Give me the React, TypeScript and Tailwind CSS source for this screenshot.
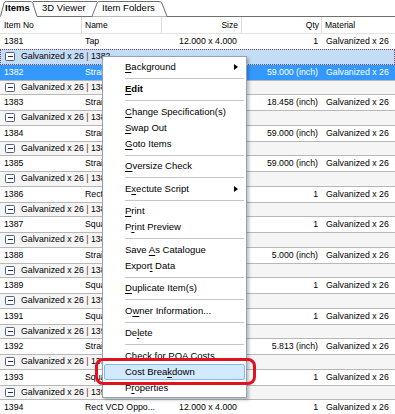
import React from 'react';

type Row =
  | { kind: 'group'; no: string; focused?: boolean }
  | { kind: 'item'; no: string; name: string; size?: string; qty: string; selected?: boolean };

const rows: Row[] = [
  { kind: 'item', no: '1381', name: 'Tap', size: '12.000 x 4.000', qty: '1' },
  { kind: 'group', no: '1382', focused: true },
  { kind: 'item', no: '1382', name: 'Straight Duct', qty: '59.000 (inch)', selected: true },
  { kind: 'group', no: '1383' },
  { kind: 'item', no: '1383', name: 'Straight Duct', qty: '18.458 (inch)' },
  { kind: 'group', no: '1384' },
  { kind: 'item', no: '1384', name: 'Straight Duct', qty: '59.000 (inch)' },
  { kind: 'group', no: '1385' },
  { kind: 'item', no: '1385', name: 'Straight Duct', qty: '59.000 (inch)' },
  { kind: 'group', no: '1386' },
  { kind: 'item', no: '1386', name: 'Rectangular Elbow', qty: '1' },
  { kind: 'group', no: '1387' },
  { kind: 'item', no: '1387', name: 'Square to Round', qty: '1' },
  { kind: 'group', no: '1388' },
  { kind: 'item', no: '1388', name: 'Straight Duct', qty: '5.000 (inch)' },
  { kind: 'group', no: '1389' },
  { kind: 'item', no: '1389', name: 'Square to Round', qty: '1' },
  { kind: 'group', no: '1391' },
  { kind: 'item', no: '1391', name: 'Square to Round', qty: '1' },
  { kind: 'group', no: '1392' },
  { kind: 'item', no: '1392', name: 'Straight Duct', qty: '5.813 (inch)' },
  { kind: 'group', no: '1393' },
  { kind: 'item', no: '1393', name: 'Square to Round', qty: '1' },
  { kind: 'group', no: '1394' },
  { kind: 'item', no: '1394', name: 'Rect VCD Oppo...', size: '12.000 x 4.000', qty: '1' },
];

type MenuEntry =
  | { sep: true }
  | { sep?: false; label: string; hot: number; arrow?: boolean; bold?: boolean; active?: boolean };

const menu: MenuEntry[] = [
  { label: 'Background', hot: 0, arrow: true },
  { sep: true },
  { label: 'Edit', hot: 0, bold: true },
  { sep: true },
  { label: 'Change Specification(s)', hot: 0 },
  { label: 'Swap Out', hot: 0 },
  { label: 'Goto Items', hot: 0 },
  { sep: true },
  { label: 'Oversize Check', hot: 0 },
  { sep: true },
  { label: 'Exectute Script', hot: 1, arrow: true },
  { sep: true },
  { label: 'Print', hot: 0 },
  { label: 'Print Preview', hot: 1 },
  { sep: true },
  { label: 'Save As Catalogue', hot: 5 },
  { label: 'Export Data', hot: 5 },
  { sep: true },
  { label: 'Duplicate Item(s)', hot: 0 },
  { sep: true },
  { label: 'Owner Information...', hot: 1 },
  { sep: true },
  { label: 'Delete', hot: 2 },
  { sep: true },
  { label: 'Check for POA Costs', hot: -1 },
  { label: 'Cost Breakdown', hot: 9, active: true },
  { label: 'Properties', hot: 1 },
];

const Hot = ({ text, i }: { text: string; i: number }) =>
  i < 0 ? (
    <>{text}</>
  ) : (
    <>
      {text.slice(0, i)}
      <span className="underline underline-offset-[1.5px]">{text[i]}</span>
      {text.slice(i + 1)}
    </>
  );

const TabStrip = () => (
  <div className="relative h-[17px] bg-white text-[9.5px] text-black">
    <svg className="absolute inset-0" width="395" height="17" viewBox="0 0 395 17">
      <path d="M37 16.5H395" stroke="#6f6f6f" fill="none" />
      <path d="M33 1.5H97" stroke="#6f6f6f" fill="none" />
      <path d="M92 16.5L97.3 2.6Q97.9 1.5 99.5 1.5H159Q161 1.5 161.8 3L167 16.5" fill="#fff" stroke="#6f6f6f" />
      <path d="M0.5 16.5L4 3Q4.6 1.5 6.5 1.5H30Q32 1.5 32.8 3L37 16.5" fill="#fff" stroke="#6f6f6f" />
    </svg>
    <div className="relative flex h-full items-center pb-[1px]">
      <span className="w-[37px] shrink-0 pl-[5px] font-bold">Items</span>
      <span className="w-[60px] shrink-0 pl-[5px]">3D Viewer</span>
      <span className="shrink-0 pl-[5px]">Item Folders</span>
    </div>
  </div>
);

const Header = () => (
  <div className="flex h-[17px] items-center border-b border-[#e2e2e2] bg-white text-[8.5px] text-black">
    <div className="flex h-full w-[82px] shrink-0 items-center border-r border-[#dcdcdc] pl-[4px]">Item No</div>
    <div className="flex h-full w-[80px] shrink-0 items-center border-r border-[#dcdcdc] pl-[3px]">Name</div>
    <div className="flex h-full w-[80px] shrink-0 items-center justify-end border-r border-[#dcdcdc] pr-[3px]">Size</div>
    <div className="flex h-full w-[80px] shrink-0 items-center justify-end border-r border-[#dcdcdc] pr-[2px]">Qty</div>
    <div className="flex h-full flex-1 items-center pl-[3px]">Material</div>
  </div>
);

const GroupRow = ({ no, focused }: { no: string; focused?: boolean }) => (
  <div
    className={
      focused
        ? 'flex h-[15.25px] items-center whitespace-nowrap border border-dotted border-[#7a4670] bg-[#c4ddf6] pl-[4px]'
        : 'flex h-[15.25px] items-center whitespace-nowrap border-y border-[#b8b8b8] bg-[#f5f5f5] pl-[5px]'
    }
  >
    <span className="flex h-[9px] w-[10px] shrink-0 items-center justify-center rounded-[1.5px] border border-[#4f5f86] bg-white">
      <span className="h-px w-[5px] bg-[#1d2d5c]" />
    </span>
    <span className="ml-[6px]">
      Galvanized x 26 <span className="text-[#7a1e2a]">|</span> {no}
    </span>
  </div>
);

const ItemRow = ({ r }: { r: Extract<Row, { kind: 'item' }> }) => (
  <div className={`flex h-[15.25px] items-center whitespace-nowrap ${r.selected ? 'bg-[#3399ff] text-white' : 'bg-white'}`}>
    <div className="w-[82px] shrink-0 pl-[4px]">{r.no}</div>
    <div className="w-[80px] shrink-0 overflow-hidden pl-[3px]">{r.name}</div>
    <div className="w-[80px] shrink-0 pr-[5px] text-right">{r.size}</div>
    <div className="w-[80px] shrink-0 pr-[4px] text-right">{r.qty}</div>
    <div className="flex-1 pl-[4px]">Galvanized x 26</div>
  </div>
);

const ContextMenu = () => (
  <div className="absolute left-[102px] top-[56px] w-[145px] border border-[#8fa2c0] bg-white pb-[1px] pt-[2px] text-[9.5px] text-black shadow-[2px_2px_3px_rgba(0,0,0,0.25)]">
    {menu.map((m, i) =>
      m.sep ? (
        <div key={i} className="flex h-[6.5px] items-center pl-[22px] pr-[2px]">
          <div className="h-px w-full bg-[#c6c6c6]" />
        </div>
      ) : (
        <div
          key={i}
          className={
            m.active
              ? 'mx-[1px] flex h-[16px] items-center rounded-[2px] border border-[#84b9ec] bg-[#d3e9fd] pl-[20px]'
              : 'flex h-[16px] items-center justify-between pl-[22px] pr-[8px]'
          }
        >
          <span className={m.bold ? 'font-bold' : ''}>
            <Hot text={m.label} i={m.hot} />
          </span>
          {m.arrow && <span className="h-0 w-0 border-y-[3.5px] border-l-[4px] border-y-transparent border-l-black" />}
        </div>
      )
    )}
  </div>
);

export default function App() {
  return (
    <div className="relative h-[414px] w-[395px] overflow-hidden bg-white font-['Liberation_Sans',Arial,sans-serif] text-black">
      <TabStrip />
      <Header />
      <div className="text-[8.75px]">
        {rows.map((r, i) =>
          r.kind === 'group' ? <GroupRow key={i} no={r.no} focused={r.focused} /> : <ItemRow key={i} r={r} />
        )}
      </div>
      <ContextMenu />
      <div className="pointer-events-none absolute left-[95px] top-[358px] h-[27px] w-[161px] rounded-[8px] border-[3px] border-[#e3101d]" />
    </div>
  );
}
